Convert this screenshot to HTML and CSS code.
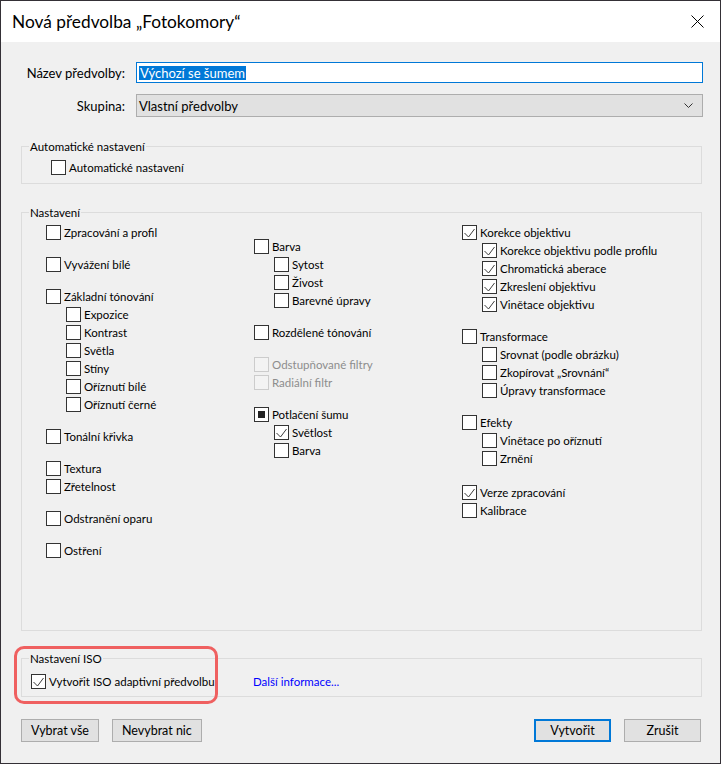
FILE: index.html
```html
<!DOCTYPE html>
<html lang="cs">
<head>
<meta charset="utf-8">
<title>Nová předvolba „Fotokomory“</title>
<link rel="stylesheet" href="styles.css">
</head>
<body>
<div class="window">
  <div class="titlebar">
    <span class="title">Nová předvolba „Fotokomory“</span>
    <svg class="close" width="13" height="13" viewBox="0 0 13 13"><path d="M0.5 0.5L12.5 12.5M12.5 0.5L0.5 12.5" stroke="#000" stroke-width="1" fill="none"/></svg>
  </div>
  <div class="content">
    <div class="form">
      <span class="flabel">Název předvolby:</span>
      <div class="input"><span class="sel">Výchozí se šumem</span></div>
      <span class="flabel">Skupina:</span>
      <div class="select"><span>Vlastní předvolby</span><svg width="9" height="5" viewBox="0 0 9 5"><path d="M0.5 0.5L4.5 4.5L8.5 0.5" stroke="#333" fill="none"/></svg></div>
    </div>

    <fieldset class="group auto">
      <legend>Automatické nastavení</legend>
      <div class="auto-body">
        <div class="item"><span class="cb"></span>Automatické nastavení</div>
      </div>
    </fieldset>

    <fieldset class="group settings">
      <legend>Nastavení</legend>
      <div class="cols">
        <div class="col">
          <div class="grp"><div class="item"><span class="cb"></span>Zpracování a profil</div></div>
          <div class="grp"><div class="item"><span class="cb"></span>Vyvážení bílé</div></div>
          <div class="grp">
            <div class="item"><span class="cb"></span>Základní tónování</div>
            <div class="item sub"><span class="cb"></span>Expozice</div>
            <div class="item sub"><span class="cb"></span>Kontrast</div>
            <div class="item sub"><span class="cb"></span>Světla</div>
            <div class="item sub"><span class="cb"></span>Stíny</div>
            <div class="item sub"><span class="cb"></span>Oříznutí bílé</div>
            <div class="item sub"><span class="cb"></span>Oříznutí černé</div>
          </div>
          <div class="grp"><div class="item"><span class="cb"></span>Tonální křivka</div></div>
          <div class="grp">
            <div class="item"><span class="cb"></span>Textura</div>
            <div class="item"><span class="cb"></span>Zřetelnost</div>
          </div>
          <div class="grp"><div class="item"><span class="cb"></span>Odstranění oparu</div></div>
          <div class="grp"><div class="item"><span class="cb"></span>Ostření</div></div>
        </div>
        <div class="col col2">
          <div class="grp">
            <div class="item"><span class="cb"></span>Barva</div>
            <div class="item sub"><span class="cb"></span>Sytost</div>
            <div class="item sub"><span class="cb"></span>Živost</div>
            <div class="item sub"><span class="cb"></span>Barevné úpravy</div>
          </div>
          <div class="grp"><div class="item"><span class="cb"></span>Rozdělené tónování</div></div>
          <div class="grp">
            <div class="item disabled"><span class="cb"></span>Odstupňované filtry</div>
            <div class="item disabled"><span class="cb"></span>Radiální filtr</div>
          </div>
          <div class="grp">
            <div class="item"><span class="cb mixed"></span>Potlačení šumu</div>
            <div class="item sub"><span class="cb"><svg viewBox="0 0 13 13"><path d="M1.5 7L5.5 11L11.5 3" stroke="#3c3c3c" fill="none"/></svg></span>Světlost</div>
            <div class="item sub"><span class="cb"></span>Barva</div>
          </div>
        </div>
        <div class="col">
          <div class="grp">
            <div class="item"><span class="cb"><svg viewBox="0 0 13 13"><path d="M1.5 7L5.5 11L11.5 3" stroke="#3c3c3c" fill="none"/></svg></span>Korekce objektivu</div>
            <div class="item sub"><span class="cb"><svg viewBox="0 0 13 13"><path d="M1.5 7L5.5 11L11.5 3" stroke="#3c3c3c" fill="none"/></svg></span>Korekce objektivu podle profilu</div>
            <div class="item sub"><span class="cb"><svg viewBox="0 0 13 13"><path d="M1.5 7L5.5 11L11.5 3" stroke="#3c3c3c" fill="none"/></svg></span>Chromatická aberace</div>
            <div class="item sub"><span class="cb"><svg viewBox="0 0 13 13"><path d="M1.5 7L5.5 11L11.5 3" stroke="#3c3c3c" fill="none"/></svg></span>Zkreslení objektivu</div>
            <div class="item sub"><span class="cb"><svg viewBox="0 0 13 13"><path d="M1.5 7L5.5 11L11.5 3" stroke="#3c3c3c" fill="none"/></svg></span>Vinětace objektivu</div>
          </div>
          <div class="grp">
            <div class="item"><span class="cb"></span>Transformace</div>
            <div class="item sub"><span class="cb"></span>Srovnat (podle obrázku)</div>
            <div class="item sub"><span class="cb"></span>Zkopírovat „Srovnání“</div>
            <div class="item sub"><span class="cb"></span>Úpravy transformace</div>
          </div>
          <div class="grp">
            <div class="item"><span class="cb"></span>Efekty</div>
            <div class="item sub"><span class="cb"></span>Vinětace po oříznutí</div>
            <div class="item sub"><span class="cb"></span>Zrnění</div>
          </div>
          <div class="grp grp-last">
            <div class="item"><span class="cb"><svg viewBox="0 0 13 13"><path d="M1.5 7L5.5 11L11.5 3" stroke="#3c3c3c" fill="none"/></svg></span>Verze zpracování</div>
            <div class="item"><span class="cb"></span>Kalibrace</div>
          </div>
        </div>
      </div>
    </fieldset>

    <fieldset class="group iso">
      <legend>Nastavení ISO</legend>
      <div class="iso-row">
        <div class="item iso-item"><span class="cb"><svg viewBox="0 0 13 13"><path d="M1.5 7L5.5 11L11.5 3" stroke="#3c3c3c" fill="none"/></svg></span>Vytvořit ISO adaptivní předvolbu</div>
        <span class="link">Další informace...</span>
      </div>
    </fieldset>

    <div class="buttons">
      <span class="btn">Vybrat vše</span>
      <span class="btn">Nevybrat nic</span>
      <span class="btn primary">Vytvořit</span>
      <span class="btn">Zrušit</span>
    </div>
  </div>
  <div class="highlight"></div>
</div>
</body>
</html>
```

FILE: styles.css
```css
html, body {
  margin: 0;
  padding: 0;
  background: #f0f0f0;
}

body {
  font-family: Lato, "Noto Sans", "DejaVu Sans", sans-serif;
  font-size: 11.5px;
  color: #000;
}

.window {
  position: relative;
  width: 721px;
  height: 764px;
  box-sizing: border-box;
  border: 1px solid #343036;
  background: #f0f0f0;
  display: flex;
  flex-direction: column;
}

.titlebar {
  height: 41px;
  flex: 0 0 41px;
  background: #fff;
  display: flex;
  align-items: center;
  justify-content: space-between;
  padding: 0 16px 0 11px;
}

.title {
  font-size: 17.3px;
  color: #000;
}

.close {
  display: block;
}

.content {
  padding: 20px 18px 0 20px;
}

.form {
  display: grid;
  grid-template-columns: 104px 1fr;
  column-gap: 11px;
  row-gap: 11px;
  margin-right: -1px;
  align-items: center;
  font-size: 13px;
}

.flabel {
  text-align: right;
  white-space: nowrap;
}

.input {
  height: 21px;
  box-sizing: border-box;
  border: 1px solid #0078d7;
  background: #fff;
  padding-left: 2px;
  display: flex;
  align-items: center;
}

.sel {
  display: inline-block;
  background: #0078d7;
  color: #fff;
  height: 14px;
  line-height: 14px;
  padding: 0 1px;
}

.select {
  height: 23px;
  box-sizing: border-box;
  border: 1px solid #adadad;
  background: #e1e1e1;
  padding: 0 9px 0 2px;
  display: flex;
  align-items: center;
  justify-content: space-between;
}

.select svg {
  display: block;
}

.group {
  margin: 0;
  padding: 0;
  min-width: 0;
  border: 1px solid #dcdcdc;
}

.group legend {
  margin-left: 7px;
  padding: 0 1px;
  font-size: 11.5px;
  line-height: 15px;
}

.auto {
  margin-top: 22px;
  padding: 4px 0 7px 0;
}

.auto-body {
  margin-left: 29px;
}

.settings {
  margin-top: 21px;
  height: 426px;
  box-sizing: border-box;
  padding: 3px 0 0 0;
}

.cols {
  margin-left: 24px;
  display: grid;
  grid-template-columns: 208px 208px 1fr;
}

.col2 {
  padding-top: 14px;
}

.grp + .grp {
  margin-top: 14px;
}

.grp-last {
  margin-top: 16px !important;
}

.item {
  display: flex;
  align-items: center;
  height: 18px;
  white-space: nowrap;
}

.item.sub {
  padding-left: 20px;
}

.cb {
  flex: 0 0 15px;
  width: 15px;
  height: 15px;
  box-sizing: border-box;
  border: 1px solid #333;
  background: #fff;
  margin-right: 3px;
  display: flex;
  align-items: center;
  justify-content: center;
}

.cb svg {
  display: block;
  width: 13px;
  height: 13px;
}

.cb.mixed::before {
  content: "";
  width: 7px;
  height: 7px;
  background: #222;
}

.item.disabled {
  color: #8d8d8d;
}

.item.disabled .cb {
  border-color: #cccccc;
  background: #f3f3f3;
}

.iso {
  margin-top: 20px;
  padding: 6px 0 6px 0;
}

.iso-row {
  margin-left: 9px;
  display: flex;
  align-items: center;
}

.iso-item {
  flex: 0 0 222px;
}

.link {
  color: #0000ff;
}

.buttons {
  margin-top: 22px;
  margin-right: 1px;
  display: flex;
  gap: 13px;
  font-size: 12.5px;
}

.btn {
  height: 23px;
  box-sizing: border-box;
  min-width: 77px;
  padding: 0 9px;
  border: 1px solid #adadad;
  background: #e1e1e1;
  display: flex;
  align-items: center;
  justify-content: center;
}

.btn.primary {
  margin-left: auto;
  border: 2px solid #0078d7;
}

.highlight {
  position: absolute;
  left: 13px;
  top: 645px;
  width: 204px;
  height: 58px;
  box-sizing: border-box;
  border: 3px solid #ef6060;
  border-radius: 10px;
  pointer-events: none;
}
```
